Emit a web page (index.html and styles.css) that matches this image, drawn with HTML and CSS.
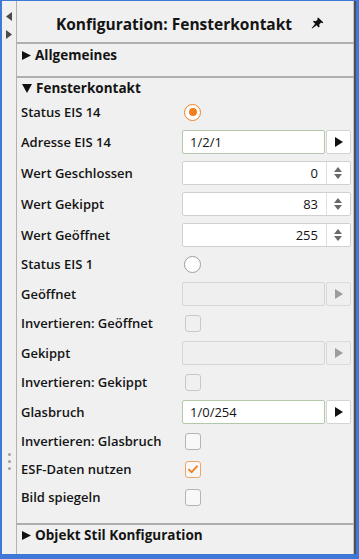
FILE: index.html
```html
<!DOCTYPE html>
<html>
    <head>
        <title>Konfiguration: Fensterkontakt</title>
        <link rel="stylesheet" href="styles.css">
    </head>
    <body>
        <div class="frame">
            <aside class="strip">
                <svg class="strip-arrow" width="6" height="9" viewBox="0 0 6 9"><polygon points="6,0 6,9 0,4.5" fill="#4a4a4a"/></svg>
                <svg class="strip-arrow" width="6" height="9" viewBox="0 0 6 9"><polygon points="0,0 0,9 6,4.5" fill="#4a4a4a"/></svg>
                <div class="grip">
                    <span></span><span></span><span></span>
                </div>
            </aside>
            <main class="panel">
                <header class="title-bar">
                    <span class="title">Konfiguration: Fensterkontakt</span>
                    <svg class="pin" width="13" height="12" viewBox="0 0 13 12">
                        <!-- Pinnadel, schräg -->
                        <path d="M7.2 0.6 L12.4 5.4 L11.2 6.2 L10.2 5.6 L8.2 7.6 L8.6 9.6 L7.6 10.4 L5.6 8.2 L1.2 11.6 L0.6 11.2 L4.2 6.8 L2 4.8 L2.8 3.8 L4.8 4.2 L6.8 2.2 L6.2 1.2 Z" fill="#111"/>
                    </svg>
                </header>

                <section class="group group-closed">
                    <div class="group-head">
                        <svg class="caret" width="9" height="9" viewBox="0 0 9 9"><polygon points="0,0 0,9 9,4.5" fill="#111"/></svg>
                        Allgemeines
                    </div>
                </section>

                <section class="group group-open">
                    <div class="group-head">
                        <svg class="caret" width="10" height="9" viewBox="0 0 10 9"><polygon points="0,0 10,0 5,9" fill="#111"/></svg>
                        Fensterkontakt
                    </div>
                    <div class="rows">
                        <div class="row row-radio">
                            <label>Status EIS 14</label>
                            <span class="radio radio-on"></span>
                        </div>
                        <div class="row row-input">
                            <label>Adresse EIS 14</label>
                            <div class="field">
                                <span class="text-box active">1/2/1</span>
                                <span class="go-btn"><svg width="8" height="10" viewBox="0 0 8 10"><polygon points="0,0 0,10 8,5" fill="#111"/></svg></span>
                            </div>
                        </div>
                        <div class="row row-input">
                            <label>Wert Geschlossen</label>
                            <div class="spin"><span class="spin-value">0</span><span class="spin-arrows"></span></div>
                        </div>
                        <div class="row row-input">
                            <label>Wert Gekippt</label>
                            <div class="spin"><span class="spin-value">83</span><span class="spin-arrows"></span></div>
                        </div>
                        <div class="row row-input">
                            <label>Wert Geöffnet</label>
                            <div class="spin"><span class="spin-value">255</span><span class="spin-arrows"></span></div>
                        </div>
                        <div class="row row-radio">
                            <label>Status EIS 1</label>
                            <span class="radio"></span>
                        </div>
                        <div class="row row-input">
                            <label>Geöffnet</label>
                            <div class="field">
                                <span class="text-box disabled"></span>
                                <span class="go-btn disabled"><svg width="8" height="10" viewBox="0 0 8 10"><polygon points="0,0 0,10 8,5" fill="#9c9c9c"/></svg></span>
                            </div>
                        </div>
                        <div class="row row-check">
                            <label>Invertieren: Geöffnet</label>
                            <span class="check disabled"></span>
                        </div>
                        <div class="row row-input">
                            <label>Gekippt</label>
                            <div class="field">
                                <span class="text-box disabled"></span>
                                <span class="go-btn disabled"><svg width="8" height="10" viewBox="0 0 8 10"><polygon points="0,0 0,10 8,5" fill="#9c9c9c"/></svg></span>
                            </div>
                        </div>
                        <div class="row row-check">
                            <label>Invertieren: Gekippt</label>
                            <span class="check disabled"></span>
                        </div>
                        <div class="row row-input">
                            <label>Glasbruch</label>
                            <div class="field">
                                <span class="text-box active">1/0/254</span>
                                <span class="go-btn"><svg width="8" height="10" viewBox="0 0 8 10"><polygon points="0,0 0,10 8,5" fill="#111"/></svg></span>
                            </div>
                        </div>
                        <div class="row row-check">
                            <label>Invertieren: Glasbruch</label>
                            <span class="check"></span>
                        </div>
                        <div class="row row-check">
                            <label>ESF-Daten nutzen</label>
                            <span class="check check-on"><svg width="12" height="10" viewBox="0 0 12 10"><path d="M1.5 5.2 L4.6 8.2 L10.6 1.6" fill="none" stroke="#f07f22" stroke-width="1.8"/></svg></span>
                        </div>
                        <div class="row row-check">
                            <label>Bild spiegeln</label>
                            <span class="check"></span>
                        </div>
                    </div>
                </section>

                <section class="group group-last">
                    <div class="group-head">
                        <svg class="caret" width="9" height="9" viewBox="0 0 9 9"><polygon points="0,0 0,9 9,4.5" fill="#111"/></svg>
                        Objekt Stil Konfiguration
                    </div>
                </section>
            </main>
        </div>
    </body>
</html>
```

FILE: styles.css
```css
* {
    box-sizing: border-box;
}

body {
    margin: 0;
    font-family: "Open Sans", "Liberation Sans", sans-serif;
    color: #141414;
}

.frame {
    width: 359px;
    height: 559px;
    display: flex;
    background-color: #f0f0f0;
    border-style: solid;
    border-color: #3f78d6;
    border-width: 1px 3px 5px 2px;
}

/* linke Leiste */
.strip {
    width: 15px;
    flex: none;
    display: flex;
    flex-direction: column;
    align-items: center;
    padding-top: 11px;
    border-right: 1px solid #b2b2b2;
}

.strip-arrow {
    display: block;
    margin-bottom: 9px;
}

.grip {
    margin-top: auto;
    margin-bottom: 84px;
    display: flex;
    flex-direction: column;
    gap: 4px;
}

.grip span {
    width: 3px;
    height: 3px;
    border-radius: 50%;
    background: #a0a0a0;
}

/* Panel */
.panel {
    flex: 1;
    display: flex;
    flex-direction: column;
    border-right: 2px solid #4f4f4f;
    box-shadow: inset -1px 0 0 #c4c4c4;
}

.panel > * {
    flex: none;
}

.title-bar {
    height: 41px;
    display: flex;
    align-items: center;
    justify-content: center;
    gap: 19px;
    padding: 4px 0 0 9px;
}

.title {
    font-size: 15.5px;
    font-weight: 700;
}

.pin {
    margin-top: -2px;
}

.group {
    border-top: 2px solid #aeaeae;
}

.group-closed {
    padding: 1px 0 11px;
}

.group-open {
    padding: 0 0 12px;
}

.group-last {
    padding: 0;
}

.group-head {
    height: 20px;
    display: flex;
    align-items: center;
    gap: 4px;
    padding-left: 5px;
    font-size: 13.5px;
    font-weight: 700;
}

.caret {
    display: block;
}

.rows {
    padding: 0 3px 0 4px;
}

.row {
    display: grid;
    grid-template-columns: 161px 1fr;
    align-items: center;
}

.row label {
    font-size: 13px;
    font-weight: 600;
    white-space: nowrap;
}

.row-radio {
    height: 28px;
}

.row-input {
    height: 31px;
}

.row-check {
    height: 28px;
}

/* Eingabefelder */
.field {
    display: flex;
    gap: 1px;
    height: 24px;
}

.text-box {
    flex: 1;
    border: 1px solid #cfcfcf;
    border-radius: 2px;
    background: #fff;
    font-size: 13px;
    line-height: 22px;
    padding-left: 7px;
}

.text-box.active {
    border-color: #b3c8aa;
}

.text-box.disabled {
    background: #efefef;
    border-color: #d6d6d6;
}

.go-btn {
    width: 25px;
    flex: none;
    display: flex;
    align-items: center;
    justify-content: center;
    border: 1px solid #d4d4d4;
    border-radius: 2px;
    background: #fff;
}

.go-btn.disabled {
    background: #efefef;
    border-color: #dadada;
}

.spin {
    height: 24px;
    display: flex;
    border: 1px solid #d0d0d0;
    border-radius: 2px;
    background: #fff;
}

.spin-value {
    flex: 1;
    text-align: right;
    font-size: 13px;
    line-height: 22px;
    padding-right: 8px;
}

.spin-arrows {
    width: 24px;
    border-left: 1px solid #e0e0e0;
    position: relative;
}

.spin-arrows::before,
.spin-arrows::after {
    content: "";
    position: absolute;
    left: 7px;
    border-left: 4.5px solid transparent;
    border-right: 4.5px solid transparent;
}

.spin-arrows::before {
    top: 5px;
    border-bottom: 5px solid #6a6a6a;
}

.spin-arrows::after {
    top: 12px;
    border-top: 5px solid #6a6a6a;
}

/* Radio und Checkbox */
.radio {
    width: 17px;
    height: 17px;
    margin-left: 2px;
    border-radius: 50%;
    border: 1px solid #9c9c9c;
    background: #fff;
}

.radio-on {
    border: 1.5px solid #f07f22;
    display: flex;
    align-items: center;
    justify-content: center;
}

.radio-on::after {
    content: "";
    width: 8px;
    height: 8px;
    border-radius: 50%;
    background: #f07f22;
}

.check {
    width: 16px;
    height: 17px;
    margin-left: 3px;
    border: 1px solid #b4b4b4;
    border-radius: 3px;
    background: #f8f8f8;
}

.check.disabled {
    border-color: #c8c8c8;
    background: #f0f0f0;
}

.check-on {
    border-color: #efa664;
    display: flex;
    align-items: center;
    justify-content: center;
}
```
